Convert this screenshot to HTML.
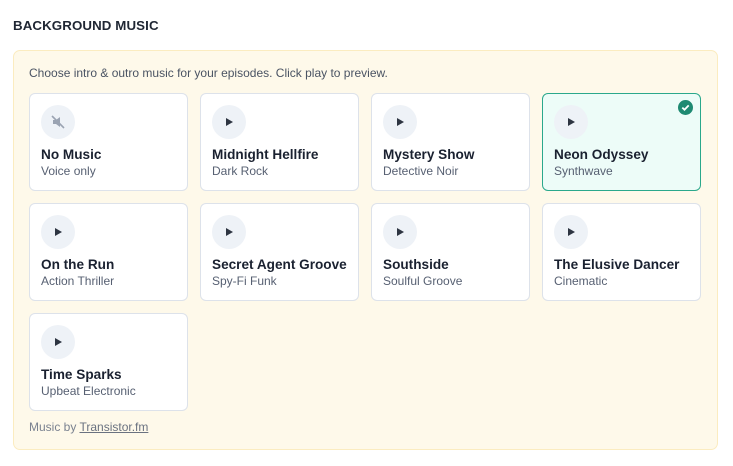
<!DOCTYPE html>
<html><head><style>
*{box-sizing:border-box;margin:0;padding:0}
body{width:733px;height:466px;background:#fff;font-family:"Liberation Sans",sans-serif;color:#1e2533;position:relative}
h1{position:absolute;left:13px;top:18px;font-size:13.3px;font-weight:700;color:#1f2633;letter-spacing:.1px}
.panel{position:absolute;left:13px;top:50px;width:705px;height:400px;background:#fef9ea;border:1px solid #fbecc0;border-radius:7px}
.desc{position:absolute;left:15px;top:15px;font-size:12px;color:#4a5363}
.card{position:absolute;width:159px;height:98px;background:#fff;border:1px solid #dde2ea;border-radius:6px}
.card.sel{background:#edfcf8;border-color:#2aa88c}
.ic{position:absolute;left:11px;top:11px;width:34px;height:34px;border-radius:50%;background:#eef2f7}
.ic:after{content:"";position:absolute;left:14px;top:12.5px;border-left:7px solid #2d3441;border-top:4.5px solid transparent;border-bottom:4.5px solid transparent}
.ic.mute:after{display:none}
.t{position:absolute;left:11px;top:53px;font-size:13.6px;font-weight:700;color:#1a2130}
.s{position:absolute;left:11px;top:70px;font-size:12px;color:#576072}
.chk{position:absolute;right:7px;top:6px;width:15px;height:15px;border-radius:50%;background:#1f8a72}
.foot{position:absolute;left:15px;top:369px;font-size:12px;color:#7a8290}
.foot u{color:#6a7280}
</style></head><body>
<h1>BACKGROUND MUSIC</h1>
<div class="panel">
<div class="desc">Choose intro &amp; outro music for your episodes. Click play to preview.</div>
<div class="card" style="left:15px;top:42px"><div class="ic mute"><svg width="34" height="34" viewBox="0 0 34 34"><path d="M12 15h3l4-3v10l-4-3h-3z" fill="#9aa3b2"/><path d="M11 11l12 12" stroke="#9aa3b2" stroke-width="1.6"/></svg></div><div class="t">No Music</div><div class="s">Voice only</div></div>
<div class="card" style="left:186px;top:42px"><div class="ic"></div><div class="t">Midnight Hellfire</div><div class="s">Dark Rock</div></div>
<div class="card" style="left:357px;top:42px"><div class="ic"></div><div class="t">Mystery Show</div><div class="s">Detective Noir</div></div>
<div class="card sel" style="left:528px;top:42px"><div class="ic"></div><div class="chk"><svg width="15" height="15" viewBox="0 0 15 15"><path d="M4.3 7.6l2.2 2.1 4.2-4.3" stroke="#fff" stroke-width="1.8" fill="none"/></svg></div><div class="t">Neon Odyssey</div><div class="s">Synthwave</div></div>
<div class="card" style="left:15px;top:152px"><div class="ic"></div><div class="t">On the Run</div><div class="s">Action Thriller</div></div>
<div class="card" style="left:186px;top:152px"><div class="ic"></div><div class="t">Secret Agent Groove</div><div class="s">Spy-Fi Funk</div></div>
<div class="card" style="left:357px;top:152px"><div class="ic"></div><div class="t">Southside</div><div class="s">Soulful Groove</div></div>
<div class="card" style="left:528px;top:152px"><div class="ic"></div><div class="t">The Elusive Dancer</div><div class="s">Cinematic</div></div>
<div class="card" style="left:15px;top:262px"><div class="ic"></div><div class="t">Time Sparks</div><div class="s">Upbeat Electronic</div></div>
<div class="foot">Music by <u>Transistor.fm</u></div>
</div>
</body></html>
